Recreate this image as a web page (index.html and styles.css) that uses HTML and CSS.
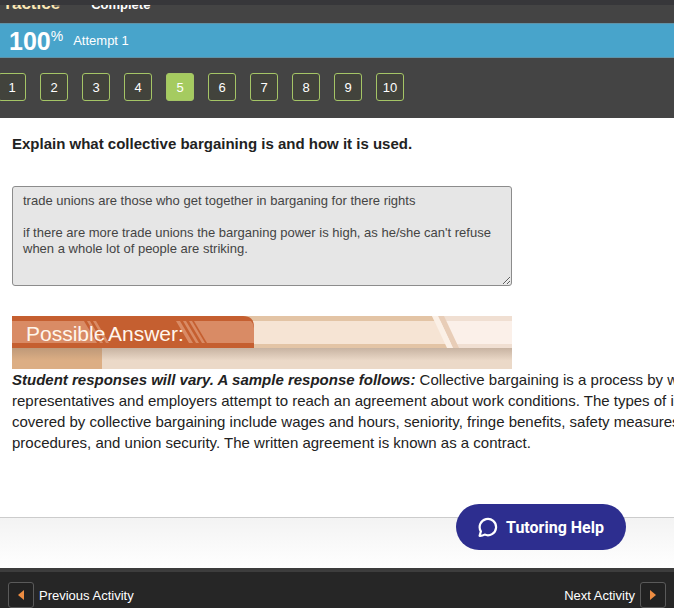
FILE: index.html
```
<!DOCTYPE html>
<html lang="en">
<head>
  <meta charset="UTF-8">
  <meta name="viewport" content="width=device-width, initial-scale=1.0">
  <title>Practice</title>
  <link rel="stylesheet" href="styles.css">
</head>
<body>

<header class="top">
  <div class="title-row">
    <h1>Practice</h1>
    <span class="status">Complete</span>
  </div>
  <div class="score">
    <strong>100<sup>%</sup></strong>
    <span>Attempt 1</span>
  </div>
  <nav class="steps">
    <button type="button">1</button>
    <button type="button">2</button>
    <button type="button">3</button>
    <button type="button">4</button>
    <button type="button" class="current">5</button>
    <button type="button">6</button>
    <button type="button">7</button>
    <button type="button">8</button>
    <button type="button">9</button>
    <button type="button">10</button>
  </nav>
</header>

<main>
  <label class="question" for="response">Explain what collective bargaining is and how it is used.</label>
  <textarea id="response" readonly>trade unions are those who get together in barganing for there rights

if there are more trade unions the barganing power is high, as he/she can't refuse when a whole lot of people are striking.</textarea>

  <svg class="banner" viewBox="0 0 500 53" role="img" aria-label="Possible Answer:">
    <defs>
      <linearGradient id="shade" x1="0" y1="0" x2="0" y2="1">
        <stop offset="0" stop-color="#927a68" stop-opacity=".4"/>
        <stop offset=".6" stop-color="#927a68" stop-opacity="0"/>
      </linearGradient>
    </defs>
    <rect width="500" height="53" fill="#ebd9c8"/>
    <rect y="32" width="90" height="21" fill="#dcae84"/>
    <rect y="32" width="500" height="21" fill="url(#shade)"/>
    <rect width="500" height="32" fill="#e3c4a5"/>
    <rect y="5" width="500" height="23" fill="#f6e4d4"/>
    <path d="M420 0h80v32h-64z" fill="#f0dfd2"/>
    <path d="M425 5h75v23h-62z" fill="#fbf0e9"/>
    <path d="M426 0h6l15 32h-6z" fill="#e8cdb7"/>
    <path d="M420 0h6l15 32h-6z" fill="#fbf0e6"/>
    <path d="M0 0h231q11 0 11 11v21H0z" fill="#c55f30"/>
    <path d="M0 5h72l13 22H0z" fill="#d98b65"/>
    <path d="M182 5h57q3 3 3 7v15h-47z" fill="#d98b65"/>
    <path d="M75 5h3l13 22h-3zM81 5h3l13 22h-3zM164 5h4l13 22h-4zM171 5h3l13 22h-3zM177 5h3l13 22h-3z" fill="#d98b65"/>
    <text x="14" y="25">Possible</text>
    <text x="96" y="25">Answer:</text>
  </svg>

  <p class="answer"><strong><em>Student responses will vary. A sample response follows:</em></strong> Collective bargaining is a process by which<br>
    representatives and employers attempt to reach an agreement about work conditions. The types of issues<br>
    covered by collective bargaining include wages and hours, seniority, fringe benefits, safety measures,<br>
    procedures, and union security. The written agreement is known as a contract.</p>
</main>

<div class="help-bar">
  <button type="button" class="help">
    <svg viewBox="0 0 20 20" width="20" height="20" aria-hidden="true">
      <path d="M1.6 18.8 2.9 14.4A8.2 8.2 0 1 1 6.6 17.6Q4.2 19 1.6 18.8Z" fill="none" stroke="#fff" stroke-width="2.2" stroke-linejoin="round"/>
    </svg>
    Tutoring Help
  </button>
</div>

<footer>
  <button type="button" class="activity">
    <span class="arrow"><svg viewBox="0 0 6 10" width="6" height="10"><path d="M6 0v10L0 5z" fill="#ee8d42"/></svg></span>
    Previous Activity
  </button>
  <button type="button" class="activity">
    Next Activity
    <span class="arrow"><svg viewBox="0 0 6 10" width="6" height="10"><path d="M0 0v10l6-5z" fill="#ee8d42"/></svg></span>
  </button>
</footer>

</body>
</html>
```
FILE: styles.css
```
* {
  box-sizing: border-box;
}
body {
  display: flex;
  flex-direction: column;
  height: 100vh;
  margin: 0;
  overflow: hidden;
  font-family: "Liberation Sans", Arial, sans-serif;
  font-size: 15px;
  color: #222;
  background: #fff;
}
button {
  font-family: inherit;
  color: #fff;
  cursor: pointer;
}
.top {
  background: #444;
  border-top: 5px solid #37373a;
  color: #fff;
}
/* the title is scrolled half way under the top edge */
.title-row {
  display: flex;
  align-items: flex-end;
  gap: 31px;
  height: 18px;
  margin-left: -6px;
  padding-bottom: 10px;
  overflow: hidden;
}
.title-row h1 {
  margin: 0;
  font-size: 17px;
  line-height: 18px;
  color: #fbe7b4;
}
.status {
  font-size: 13px;
  font-weight: bold;
  line-height: 16px;
}
.score {
  display: flex;
  align-items: center;
  gap: 10px;
  height: 35px;
  padding-left: 9px;
  background: #48a4cb;
  border-top: 1px solid #5f93a8;
  border-bottom: 1px solid #5f93a8;
  font-size: 13px;
}
.score strong {
  font-size: 25px;
  line-height: 28px;
}
.score sup {
  font-size: 14px;
  font-weight: normal;
  line-height: 0;
}
.steps {
  display: flex;
  gap: 14px;
  margin-left: -2px;
  padding: 15px 0 17px;
}
.steps button {
  width: 28px;
  height: 28px;
  padding: 0;
  border: 1px solid #a5c566;
  border-radius: 3px;
  background: #42433c;
  font-size: 13px;
}
.steps .current {
  background: #a5cb60;
}
main {
  flex: 1;
  padding: 16px 0 0 12px;
  overflow: hidden;
}
.question {
  display: block;
  margin-bottom: 32px;
  font-weight: bold;
  line-height: 20px;
}
textarea {
  display: block;
  width: 500px;
  max-width: 100%;
  height: 100px;
  margin-bottom: 30px;
  padding: 6px 10px;
  border: 1px solid #8c8c8c;
  border-radius: 3px;
  background: #e6e6e6;
  color: #444;
  font-family: inherit;
  font-size: 13px;
  line-height: 16px;
}
.banner {
  display: block;
  width: 500px;
}
.banner text {
  font-size: 21px;
  fill: #fff6ec;
}
.answer {
  margin: 0;
  line-height: 21px;
  white-space: nowrap;
}
.help-bar {
  display: flex;
  justify-content: flex-end;
  height: 51px;
  padding-right: 48px;
  border-top: 1px solid #ccc;
  background: linear-gradient(#f3f3f3, #fff);
}
.help {
  display: flex;
  align-items: center;
  justify-content: center;
  gap: 8px;
  width: 170px;
  height: 46px;
  margin-top: -14px;
  padding: 0;
  border: 0;
  border-radius: 23px;
  background: #2d2e8f;
  font-family: Roboto, sans-serif;
  font-size: 16px;
  font-weight: bold;
}
footer {
  display: flex;
  justify-content: space-between;
  padding: 10px 8px 0;
  border-top: 4px solid #3d3d3d;
  background: #262626;
}
.activity {
  display: flex;
  align-items: center;
  gap: 5px;
  padding: 0;
  border: 0;
  background: none;
  font-size: 13px;
}
.arrow {
  display: flex;
  align-items: center;
  justify-content: center;
  width: 26px;
  height: 26px;
  border: 1px solid #5a5a5a;
  border-radius: 3px;
  background: #222;
}
```
